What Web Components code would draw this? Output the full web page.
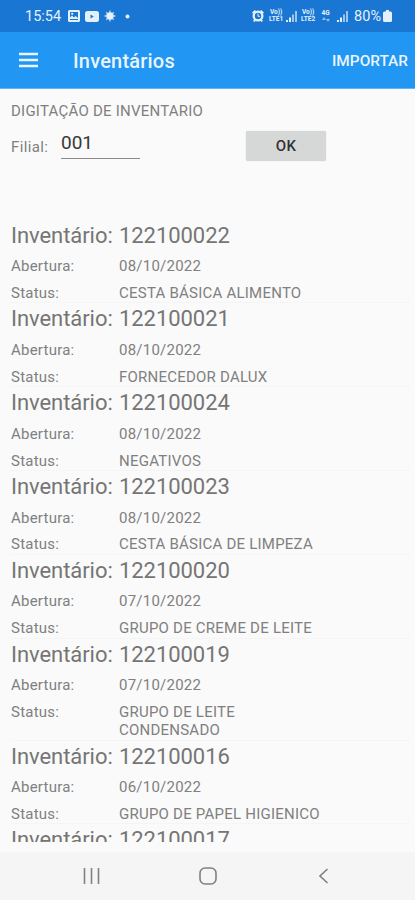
<!DOCTYPE html>
<html lang="pt-BR">
<head>
<meta charset="utf-8">
<meta name="viewport" content="width=device-width, initial-scale=1">
<title>Inventários</title>
<style>
  body {
    margin: 0;
    background: #fafafa;
    font-family: Roboto, "Liberation Sans", sans-serif;
  }
</style>
</head>
<body>
<inventory-app></inventory-app>

<script>
class StatusBar extends HTMLElement {
  constructor() {
    super();
    this.attachShadow({ mode: 'open' });
    this.shadowRoot.innerHTML = `
      <style>
        :host {
          display: flex;
          justify-content: space-between;
          align-items: center;
          height: 32px;
          box-sizing: border-box;
          padding: 0 23px 0 25px;
          background: #1976d2;
          color: #e4f1fc;
          font-size: 14.5px;
        }
        div { display: flex; align-items: center; }
        svg { display: block; fill: currentColor; }
        .time { margin-right: 7px; }
        .left svg { margin-right: 5px; }
        .volte {
          display: block;
          width: 16px;
          font-size: 6.5px;
          font-weight: 700;
          text-align: center;
          white-space: nowrap;
        }
        .volte span { display: block; height: 7px; line-height: 7px; }
        .signal { margin: 0 3px 0 2px; }
        .net { width: 11px; flex-direction: column; font-size: 6.5px; font-weight: 700; line-height: 7px; margin: 0 4px; }
        .battery { margin-left: 2px; }
      </style>
      <div class="left">
        <span class="time">15:54</span>
        <svg width="12" height="12" viewBox="0 0 12 12">
          <path fill-rule="evenodd" d="M1.5 0h9A1.5 1.5 0 0 1 12 1.5v9a1.5 1.5 0 0 1-1.5 1.5h-9A1.5 1.5 0 0 1 0 10.500v-9A1.500 1.500 0 0 1 1.500 0zM2 2v5.500l2-2 2 2 1.500-1.500L10 8V2zM2 9v1h8V9z"/>
          <circle cx="4.200" cy="3.800" r="1.100"/>
        </svg>
        <svg width="14" height="11" viewBox="0 0 14 11">
          <path fill-rule="evenodd" d="M2.500 0h9A2.500 2.500 0 0 1 14 2.500v6a2.500 2.500 0 0 1-2.500 2.500h-9A2.500 2.500 0 0 1 0 8.500v-6A2.500 2.500 0 0 1 2.500 0zM5.500 3.500v4l3.300-2z"/>
        </svg>
        <svg width="12" height="12" viewBox="0 0 12 12">
          <circle cx="6" cy="6" r="3.700"/>
          <path d="M6 .5v11M.5 6h11M2.200 2.200l7.600 7.600M9.800 2.200L2.200 9.800" stroke="currentColor" stroke-width="1.300" opacity=".75"/>
        </svg>
        <svg width="12" height="12" viewBox="0 0 12 12"><circle cx="6.500" cy="6.500" r="2"/></svg>
      </div>
      <div class="right">
        <svg width="12" height="12" viewBox="0 0 12 12" style="margin-right:4px">
          <path d="M0 2.500L2.800 0 4 1 1.200 3.700zM12 2.500L9.200 0 8 1l2.800 2.700zM1 11l2-2.500 1.500 1L2.500 12zM11 11L9 8.500l-1.500 1L9.500 12z"/>
          <path fill-rule="evenodd" d="M6 .5a5.500 5.500 0 1 1 0 11 5.500 5.500 0 0 1 0-11zm0 2.300a3.200 3.200 0 1 0 0 6.400 3.200 3.200 0 0 0 0-6.400z"/>
          <path d="M6 3.500v2.800h2" fill="none" stroke="currentColor"/>
        </svg>
        <div class="volte"><span>Vo))</span><span>LTE1</span></div>
        <svg class="signal" width="11" height="11" viewBox="0 0 11 11">
          <path d="M0 9h2v2H0zM3 6.500h2V11H3z"/><path opacity=".65" d="M6 3.500h2V11H6zM9 0h2v11H9z"/>
        </svg>
        <div class="volte"><span>Vo))</span><span>LTE2</span></div>
        <div class="net"><span>4G</span>
          <svg width="8" height="5" viewBox="0 0 8 5" opacity=".6"><path d="M0 3l2-3 2 3zM4 2h4L6 5z"/></svg>
        </div>
        <svg class="signal" style="margin-right:6px" width="11" height="11" viewBox="0 0 11 11">
          <path d="M0 9h2v2H0zM3 6.500h2V11H3z"/><path opacity=".65" d="M6 3.500h2V11H6zM9 0h2v11H9z"/>
        </svg>
        <span>80%</span>
        <svg class="battery" width="9" height="12" viewBox="0 0 9 12">
          <path d="M3 0h3v1.500h1.500A1.500 1.500 0 0 1 9 3v7.500A1.500 1.500 0 0 1 7.500 12h-6A1.500 1.500 0 0 1 0 10.500V3a1.500 1.500 0 0 1 1.500-1.500H3z"/>
        </svg>
      </div>
    `;
  }
}

class AppBar extends HTMLElement {
  constructor() {
    super();
    this.attachShadow({ mode: 'open' });
    this.shadowRoot.innerHTML = `
      <style>
        :host {
          display: flex;
          align-items: center;
          height: 57px;
          box-sizing: border-box;
          padding: 0 7px 0 19px;
          background: #2196f3;
          color: #e9f5fe;
          border-bottom: 1px solid #63b5f6;
        }
        svg { display: block; margin-right: 35px; }
        h1 {
          flex: 1;
          margin: 0;
          font-size: 20px;
          font-weight: 500;
          line-height: 26px;
          letter-spacing: .2px;
          padding-top: 2px;
        }
        .action { font-size: 15.4px; font-weight: 500; padding-top: 1px; }
      </style>
      <svg width="19" height="16" viewBox="0 0 19 16">
        <path d="M0 2h19M0 8h19M0 14h19" stroke="currentColor" stroke-width="2.400"/>
      </svg>
      <h1><slot></slot></h1>
      <span class="action"><slot name="action"></slot></span>
    `;
  }
}

class BranchForm extends HTMLElement {
  constructor() {
    super();
    this.attachShadow({ mode: 'open' });
    this.shadowRoot.innerHTML = `
      <style>
        :host {
          display: block;
          height: 130.6px;
          box-sizing: border-box;
          padding: 13px 11px 0;
          color: #808080;
          font-size: 15px;
          line-height: 18px;
          letter-spacing: .23px;
        }
        .row { display: flex; align-items: center; height: 30px; margin-top: 12px; }
        label { width: 50px; letter-spacing: .35px; }
        .field {
          width: 79px;
          height: 28px;
          box-sizing: border-box;
          padding-top: 1px;
          margin-top: -5px;
          border-bottom: 1px solid #8a8a8a;
          color: #383838;
          font-size: 19px;
          letter-spacing: 0;
          line-height: 22px;
        }
        button {
          width: 80px;
          height: 30px;
          margin: -2px 0 0 106px;
          padding: 0;
          border: 0;
          border-radius: 2px;
          background: #d6d7d7;
          box-shadow: 0 0 1px #c4c4c4;
          color: #333;
          font: 500 15px Roboto, "Liberation Sans", sans-serif;
          letter-spacing: .3px;
        }
      </style>
      <div><slot></slot></div>
      <div class="row">
        <label>Filial:</label>
        <div class="field">001</div>
        <button>OK</button>
      </div>
    `;
  }
}

class InventoryItem extends HTMLElement {
  constructor() {
    super();
    this.attachShadow({ mode: 'open' });
  }

  connectedCallback() {
    const date = this.getAttribute('date');
    this.shadowRoot.innerHTML = `
      <style>
        :host {
          display: grid;
          grid-template-columns: 108px 210px;
          padding: 3px 0 0;
          margin: 0 6px 0 11px;
          border-bottom: 1px solid #f5f5f5;
          color: #808080;
          font-size: 15px;
          line-height: 18.3px;
          letter-spacing: .23px;
        }
        .title {
          font-size: 22px;
          line-height: 26px;
          letter-spacing: -.06px;
          color: #757575;
          white-space: nowrap;
        }
        .cell { padding-top: 8.6px; }
      </style>
      <div class="title">Inventário:</div><div class="title">${this.getAttribute('number')}</div>
      ${date ? `
      <div class="cell">Abertura:</div><div class="cell">${date}</div>
      <div class="cell">Status:</div><div class="cell"><slot></slot></div>` : ''}
    `;
  }
}

class NavBar extends HTMLElement {
  constructor() {
    super();
    this.attachShadow({ mode: 'open' });
    this.shadowRoot.innerHTML = `
      <style>
        :host {
          display: flex;
          justify-content: space-between;
          align-items: center;
          height: 48px;
          box-sizing: border-box;
          padding: 0 83px;
          background: #f5f5f5;
        }
        svg { display: block; fill: none; stroke: #808080; stroke-width: 1.6; }
      </style>
      <svg width="17" height="16" viewBox="0 0 17 16"><path d="M1.500 0v16M8.500 0v16M15.500 0v16"/></svg>
      <svg width="18" height="18" viewBox="0 0 18 18"><rect x="1" y="1" width="16" height="16" rx="5"/></svg>
      <svg width="17" height="16" viewBox="0 0 17 16"><path d="M12.500 1L5 8l7.500 7"/></svg>
    `;
  }
}

class InventoryApp extends HTMLElement {
  constructor() {
    super();
    this.attachShadow({ mode: 'open' });
    const items = [
      ['122100022', '08/10/2022', 'CESTA BÁSICA ALIMENTO'],
      ['122100021', '08/10/2022', 'FORNECEDOR DALUX'],
      ['122100024', '08/10/2022', 'NEGATIVOS'],
      ['122100023', '08/10/2022', 'CESTA BÁSICA DE LIMPEZA'],
      ['122100020', '07/10/2022', 'GRUPO DE CREME DE LEITE'],
      ['122100019', '07/10/2022', 'GRUPO DE LEITE<br>CONDENSADO'],
      ['122100016', '06/10/2022', 'GRUPO DE PAPEL HIGIENICO'],
      ['122100017', '', '']
    ];
    this.shadowRoot.innerHTML = `
      <style>
        :host {
          display: flex;
          flex-direction: column;
          height: 900px;
          overflow: hidden;
        }
        .list { flex: 1; min-height: 0; overflow: hidden; margin-bottom: 10px; }
      </style>
      <status-bar></status-bar>
      <app-bar>Inventários<span slot="action">IMPORTAR</span></app-bar>
      <branch-form>DIGITAÇÃO DE INVENTARIO</branch-form>
      <div class="list">
        ${items.map(([number, date, status]) => `<inventory-item number="${number}" date="${date}">${status}</inventory-item>`).join('')}
      </div>
      <nav-bar></nav-bar>
    `;
  }
}

customElements.define('status-bar', StatusBar);
customElements.define('app-bar', AppBar);
customElements.define('branch-form', BranchForm);
customElements.define('inventory-item', InventoryItem);
customElements.define('nav-bar', NavBar);
customElements.define('inventory-app', InventoryApp);
</script>
</body>
</html>
